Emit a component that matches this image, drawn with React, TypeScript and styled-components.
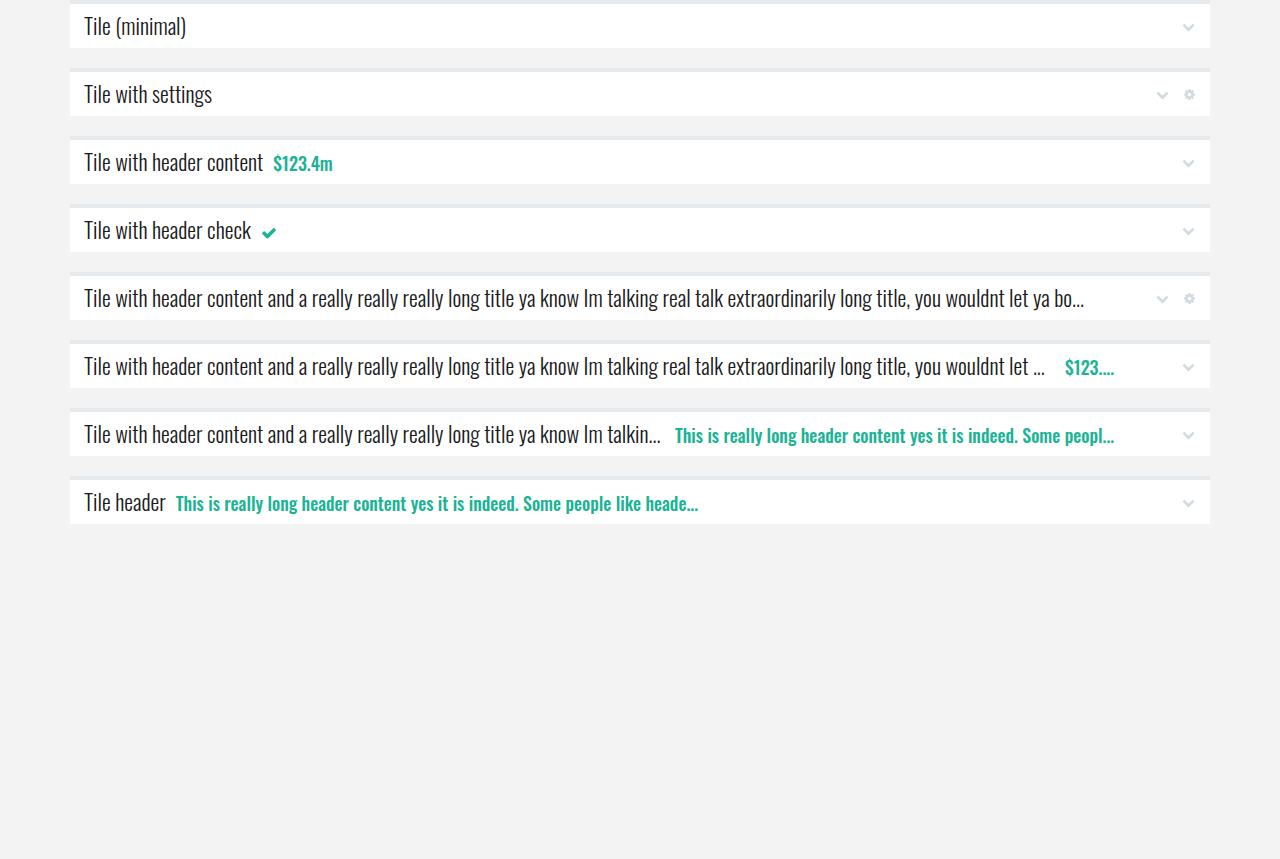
import React from "react";
import styled, { createGlobalStyle } from "styled-components";

const GlobalStyle = createGlobalStyle`
  *, *::before, *::after { box-sizing: border-box; }
  body {
    margin: 0;
    background: #f3f3f3;
    color: #1a1a1a;
    font-family: Oswald, "Liberation Sans Narrow", "Roboto Condensed", "Liberation Sans", sans-serif;
  }
`;

const Page = styled.main`
  max-width: 1140px;
  margin: 0 auto;
`;

const Tile = styled.section`
  display: flex;
  align-items: center;
  justify-content: space-between;
  margin-bottom: 20px;
  padding: 0 15px 0 14px;
  border-top: 4px solid #e7eaec;
  background: #fff;
`;

const Heading = styled.div`
  display: flex;
  align-items: baseline;
  min-width: 0;
  height: 44px;
  line-height: 42px;
  white-space: nowrap;
`;

const Title = styled.h2<{ $width?: number }>`
  flex: 0 0 auto;
  width: ${(p) => (p.$width ? `${p.$width}px` : "auto")};
  margin: 0 10px 0 0;
  font-size: 22px;
  font-weight: 300;
`;

const Content = styled.span`
  color: #1ab394;
  font-size: 18px;
  font-weight: 500;
`;

const Check = styled.svg`
  width: 16px;
  height: 16px;
  align-self: center;
  margin-top: 6px;
  fill: #1ab394;
`;

const Tools = styled.div`
  display: flex;
  gap: 15px;
`;

const Tool = styled.button`
  display: block;
  padding: 0;
  border: 0;
  background: none;
  color: #d1dade;
  cursor: pointer;

  svg {
    display: block;
    height: 13px;
    fill: currentColor;
  }
`;

const CHEVRON =
  "M1683 808l-742 741q-19 19-45 19t-45-19l-742-741q-19-19-19-45.5t19-45.5l166-165q19-19 45-19t45 19l531 531 531-531q19-19 45-19t45 19l166 165q19 19 19 45.5t-19 45.5z";
const COG =
  "M1152 896q0-106-75-181t-181-75-181 75-75 181 75 181 181 75 181-75 75-181zm512-109v222q0 12-8 23t-20 13l-185 28q-19 54-39 91 35 50 107 138 10 12 10 25t-9 23q-27 37-99 108t-94 71q-12 0-26-9l-138-108q-44 23-91 38-16 136-29 186-7 28-36 28h-222q-14 0-24.5-8.5t-11.5-21.5l-28-184q-49-16-90-37l-141 107q-10 9-25 9-14 0-25-11-126-114-165-168-7-10-7-23 0-12 8-23 15-21 51-66.5t54-70.5q-27-50-41-99l-183-27q-13-2-21-12.5t-8-23.5v-222q0-12 8-23t19-13l186-28q14-46 39-92-40-57-107-138-10-12-10-24 0-10 9-23 26-36 98.5-107.5t94.5-71.5q13 0 26 10l138 107q44-23 91-38 16-136 29-186 7-28 36-28h222q14 0 24.5 8.5t11.5 21.5l28 184q49 16 90 37l142-107q9-9 24-9 13 0 25 10 129 119 165 170 7 8 7 22 0 12-8 23-15 21-51 66.5t-54 70.5q26 50 41 98l183 28q13 2 21 12.5t8 23.5z";
const CHECK =
  "M1671 566q0 40-28 68l-724 724-136 136q-28 28-68 28t-68-28l-136-136-362-362q-28-28-28-68t28-68l136-136q28-28 68-28t68 28l294 295 656-657q28-28 68-28t68 28l136 136q28 28 28 68z";

type TileData = {
  title: string;
  titleWidth?: number;
  content?: string;
  check?: boolean;
  settings?: boolean;
};

const LONG = "Tile with header content and a really really really long title ya know Im talkin";

const tiles: TileData[] = [
  { title: "Tile (minimal)" },
  { title: "Tile with settings", settings: true },
  { title: "Tile with header content", content: "$123.4m" },
  { title: "Tile with header check", check: true },
  { title: `${LONG}g real talk extraordinarily long title, you wouldnt let ya bo...`, settings: true },
  {
    title: `${LONG}g real talk extraordinarily long title, you wouldnt let ...`,
    titleWidth: 971,
    content: "$123....",
  },
  {
    title: `${LONG}...`,
    titleWidth: 581,
    content: "This is really long header content yes it is indeed. Some peopl...",
  },
  {
    title: "Tile header",
    content: "This is really long header content yes it is indeed. Some people like heade...",
  },
];

export default function App() {
  return (
    <>
      <GlobalStyle />
      <Page>
        {tiles.map((t) => (
          <Tile key={t.title}>
            <Heading>
              <Title $width={t.titleWidth}>{t.title}</Title>
              {t.content && <Content>{t.content}</Content>}
              {t.check && (
                <Check viewBox="0 0 1792 1792" role="img" aria-label="Complete">
                  <path d={CHECK} />
                </Check>
              )}
            </Heading>
            <Tools>
              <Tool type="button" aria-label="Toggle tile">
                <svg viewBox="0 0 1792 1792" width="13"><path d={CHEVRON} /></svg>
              </Tool>
              {t.settings && (
                <Tool type="button" aria-label="Settings">
                  <svg viewBox="128 0 1536 1792" width="11"><path d={COG} /></svg>
                </Tool>
              )}
            </Tools>
          </Tile>
        ))}
      </Page>
    </>
  );
}
